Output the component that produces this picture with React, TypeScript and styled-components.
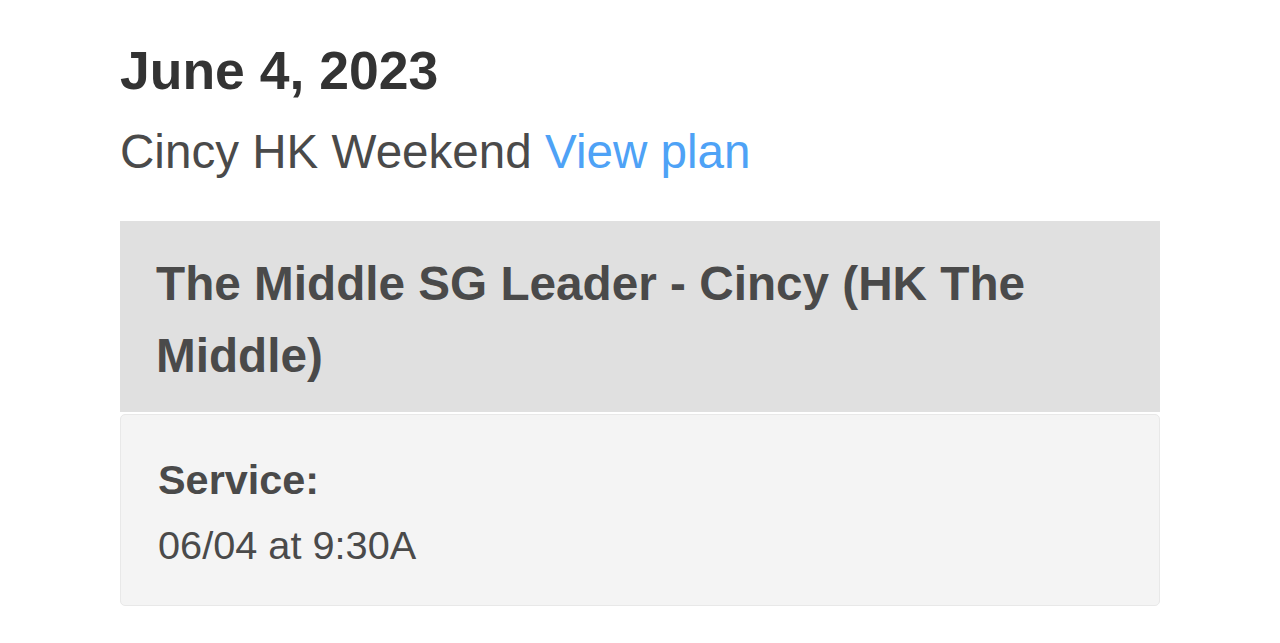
import * as React from "react";
import styled, { createGlobalStyle } from "styled-components";

const GlobalStyle = createGlobalStyle`
  html, body {
    margin: 0;
    padding: 0;
    background: #fff;
  }

  body {
    font-family: "Liberation Sans", Arial, Helvetica, sans-serif;
    color: #4a4a4a;
  }
`;

const Page = styled.div`
  padding: 40px 120px 0 120px;
  width: 1040px;
`;

const DateHeading = styled.h1`
  margin: 0;
  font-size: 53.5px;
  line-height: 62px;
  font-weight: 700;
  color: #333;
`;

const PlanLine = styled.div`
  margin-top: 22px;
  font-size: 47.6px;
  line-height: 56px;
  color: #4a4a4a;
`;

const PlanLink = styled.a`
  color: #4ea2f6;
  text-decoration: none;
`;

const Card = styled.section`
  margin-top: 40.5px;
  display: flex;
  flex-direction: column;
  gap: 2px;
`;

const CardHeader = styled.div`
  background: #e0e0e0;
  padding: 27px 36px 20px 36px;
`;

const CardTitle = styled.h2`
  margin: 0;
  font-size: 47.7px;
  line-height: 72px;
  font-weight: 700;
  color: #4a4a4a;
`;

const CardBody = styled.div`
  background: #f4f4f4;
  border: 1px solid #e8e8e8;
  border-radius: 5px;
  padding: 41.5px 37px 37px 37px;
`;

interface FieldProps {
  readonly $bold?: boolean;
}

const FieldText = styled.div<FieldProps>`
  font-size: ${props => (props.$bold ? "41.4px" : "39.7px")};
  line-height: ${props => (props.$bold ? "48px" : "46px")};
  font-weight: ${props => (props.$bold ? 700 : 400)};
  color: #4a4a4a;
  margin-top: ${props => (props.$bold ? "0" : "17.5px")};
`;

const App = () => (
  <Page>
    <GlobalStyle />
    <DateHeading>June 4, 2023</DateHeading>
    <PlanLine>
      Cincy HK Weekend <PlanLink href="#">View plan</PlanLink>
    </PlanLine>
    <Card>
      <CardHeader>
        <CardTitle>The Middle SG Leader - Cincy (HK The Middle)</CardTitle>
      </CardHeader>
      <CardBody>
        <FieldText $bold>Service:</FieldText>
        <FieldText>06/04 at 9:30A</FieldText>
      </CardBody>
    </Card>
  </Page>
);

export default App;
